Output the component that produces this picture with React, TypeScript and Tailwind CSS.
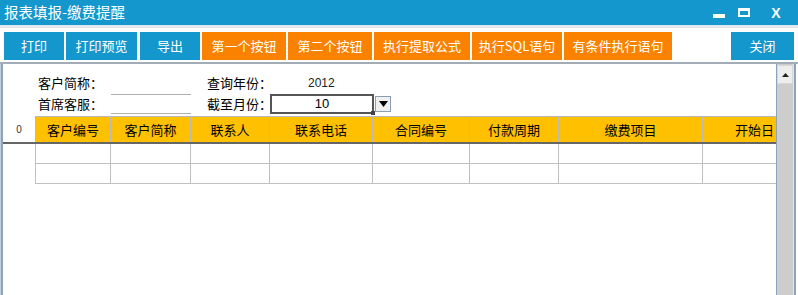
import React from "react";

const font = { fontFamily: '"Noto Sans CJK SC", "Liberation Sans", sans-serif' };

const buttons: { label: string; w: number; color: string; ml: number }[] = [
  { label: "打印", w: 60, color: "bg-[#1497cc]", ml: 4 },
  { label: "打印预览", w: 71, color: "bg-[#1497cc]", ml: 2 },
  { label: "导出", w: 60, color: "bg-[#1497cc]", ml: 3 },
  { label: "第一个按钮", w: 84, color: "bg-[#fb8200]", ml: 2 },
  { label: "第二个按钮", w: 84, color: "bg-[#fb8200]", ml: 2 },
  { label: "执行提取公式", w: 96, color: "bg-[#fb8200]", ml: 2 },
  { label: "执行SQL语句", w: 90, color: "bg-[#fb8200]", ml: 2 },
  { label: "有条件执行语句", w: 108, color: "bg-[#fb8200]", ml: 2 },
];

const cols: { label: string; w: number; align?: string }[] = [
  { label: "客户编号", w: 75 },
  { label: "客户简称", w: 80 },
  { label: "联系人", w: 79 },
  { label: "联系电话", w: 103 },
  { label: "合同编号", w: 97 },
  { label: "付款周期", w: 89 },
  { label: "缴费项目", w: 144 },
  { label: "开始日", w: 74, align: "right" },
];

export default function App() {
  return (
    <div className="w-[798px] h-[295px] bg-white overflow-hidden flex flex-col" style={font}>
      {/* Title bar */}
      <div className="h-[25px] bg-[#1497cc] flex items-center shrink-0">
        <span className="ml-[4px] text-white text-[14.5px] leading-none whitespace-nowrap">报表填报-缴费提醒</span>
        <div className="ml-auto flex items-center h-full">
          <div className="w-[12px] h-[4px] bg-white mt-[7px] mr-[13px]" />
          <div className="w-[12px] h-[9px] border-2 border-white border-t-[3px] mr-[20px]" />
          <div className="w-[12px] h-[12px] mr-[16px] text-white font-bold text-[14px] leading-none flex items-center justify-center" style={{ fontFamily: '"Liberation Sans", sans-serif' }}>
            X
          </div>
        </div>
      </div>
      <div className="h-[3px] bg-[#e3e8ee] shrink-0" />
      {/* Toolbar */}
      <div className="h-[34px] flex items-start pt-[4px] shrink-0">
        {buttons.map((b) => (
          <div
            key={b.label}
            className={`${b.color} h-[28px] flex items-center justify-center text-white text-[13px] shrink-0 whitespace-nowrap`}
            style={{ width: b.w, marginLeft: b.ml }}
          >
            {b.label}
          </div>
        ))}
        <div className="ml-auto mr-[4px] w-[63px] h-[28px] bg-[#1497cc] flex items-center justify-center text-white text-[13px]">关闭</div>
      </div>
      <div className="h-[2px] bg-[#a3adb8] shrink-0" />
      {/* Content */}
      <div className="flex-1 flex min-h-0">
        <div className="w-px bg-[#c4d0dc]" />
        <div className="w-[2px] bg-[#8ea2bb]" />
        <div className="w-[773px] flex flex-col">
          {/* Form */}
          <div className="h-[52px] pt-[8px] text-[13px] text-black whitespace-nowrap">
            <div className="flex h-[21px] items-center">
              <span className="ml-[35px] w-[169px] shrink-0">客户简称：</span>
              <span className="w-[101px] shrink-0">查询年份：</span>
              <span style={{ fontFamily: '"Liberation Sans", sans-serif' }} className="text-[12px] text-[#222]">2012</span>
            </div>
            <div className="flex h-[21px] items-center">
              <span className="ml-[35px] w-[73px] shrink-0">首席客服：</span>
              <div className="w-[80px] self-start h-full flex flex-col justify-between shrink-0">
                <div className="h-px bg-[#b0b0b0] mt-[1px]" />
                <div className="h-px bg-[#b0b0b0]" />
              </div>
              <span className="ml-[16px] w-[63px] shrink-0">截至月份：</span>
              <div className="w-[104px] h-[20px] border-2 border-[#555] flex items-center justify-center text-[13px] relative shrink-0" style={{ fontFamily: '"Liberation Sans", sans-serif' }}>
                10
                <div className="absolute -right-[3px] -bottom-[3px] w-[4px] h-[4px] bg-[#444]" />
              </div>
              <div className="ml-[1px] w-[16px] h-[16px] border border-[#8a9fb5] bg-[#f0f0f0] flex items-center justify-center shrink-0">
                <svg width="9" height="6" viewBox="0 0 9 6"><path d="M0 0h9L4.5 6z" fill="#000" /></svg>
              </div>
            </div>
          </div>
          {/* Table */}
          <div className="flex">
            <div className="w-[32px] h-[26px] flex items-center justify-center text-[10px] text-[#333] shrink-0" style={{ fontFamily: '"Liberation Sans", sans-serif' }}>0</div>
            {cols.map((c) => (
              <div
                key={c.label}
                className={`h-[26px] bg-[#ffc000] border-t border-l border-[#b9b9b9] flex items-center text-[13px] text-black shrink-0 whitespace-nowrap ${c.align === "right" ? "justify-end pr-[2px]" : "justify-center"}`}
                style={{ width: c.w }}
              >
                {c.label}
              </div>
            ))}
          </div>
          <div className="h-[2px] bg-[#666] w-[773px]" />
          {[0, 1].map((r) => (
            <div key={r} className="flex">
              <div className="w-[32px] h-[19px] shrink-0" />
              {cols.map((c) => (
                <div key={c.label} className="h-[20px] border-l border-b border-[#c0c0c0] shrink-0" style={{ width: c.w }} />
              ))}
            </div>
          ))}
        </div>
        {/* Scrollbar */}
        <div className="w-px bg-[#8ea2bb]" />
        <div className="w-[16px] bg-[#cdcdcd] flex flex-col">
          <div className="h-[19px] bg-[#ededed] border border-[#d8d8d8] flex items-center justify-center mt-[1px]">
            <svg width="7" height="4" viewBox="0 0 7 4"><path d="M3.5 0L7 4H0z" fill="#222" /></svg>
          </div>
        </div>
        <div className="w-px bg-[#e0e6ec]" />
        <div className="w-[2px] bg-[#8ea2bb]" />
        <div className="flex-1 bg-white" />
      </div>
    </div>
  );
}
